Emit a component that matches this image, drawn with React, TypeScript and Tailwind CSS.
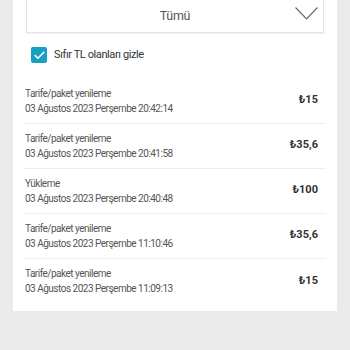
import { Check } from 'lucide-react';

const rows = [
  { title: 'Tarife/paket yenileme', date: '03 Ağustos 2023 Perşembe 20:42:14', amount: '₺15' },
  { title: 'Tarife/paket yenileme', date: '03 Ağustos 2023 Perşembe 20:41:58', amount: '₺35,6' },
  { title: 'Yükleme', date: '03 Ağustos 2023 Perşembe 20:40:48', amount: '₺100' },
  { title: 'Tarife/paket yenileme', date: '03 Ağustos 2023 Perşembe 11:10:46', amount: '₺35,6' },
  { title: 'Tarife/paket yenileme', date: '03 Ağustos 2023 Perşembe 11:09:13', amount: '₺15' },
];

export default function App() {
  return (
    <div className="h-[350px] w-[350px] overflow-hidden bg-[#ebebeb] font-['Roboto',sans-serif]">
      <div className="mx-[13px] bg-white px-[11px] pb-[7px]">
        <div className="relative mx-[2px] flex h-[33px] items-center justify-center border-x border-b border-[#e3e3e3] shadow-[0_1px_2px_rgba(0,0,0,0.06)]">
          <span className="text-[12.5px] tracking-[-0.3px] text-[#555]">Tümü</span>
          <svg className="absolute right-[5px] top-[7px]" width="23" height="13" viewBox="0 0 23 13" fill="none">
            <path d="M0.5 0.5 L11.5 12 L22.5 0.5" stroke="#666" strokeWidth="1.1" />
          </svg>
        </div>

        <label className="mt-[14px] flex items-center gap-[7px] pl-[7px]">
          <span className="flex h-[16px] w-[16px] items-center justify-center rounded-[2px] bg-[#1a9fc4]">
            <Check size={13} strokeWidth={3} className="text-white" />
          </span>
          <span className="text-[11px] tracking-[-0.4px] text-[#333]">Sıfır TL olanları gizle</span>
        </label>

        <div className="mt-[15px]">
          {rows.map((r, i) => (
            <div
              key={i}
              className={`flex h-[45px] items-center justify-between pl-[1px] pr-[8px] ${
                i < rows.length - 1 ? 'border-b border-[#eeeeee]' : ''
              }`}
            >
              <div className="flex flex-col text-[10px] leading-[15px] tracking-[-0.5px] text-[#555]">
                <span>{r.title}</span>
                <span>{r.date}</span>
              </div>
              <span className="text-[11px] font-bold text-[#333]">{r.amount}</span>
            </div>
          ))}
        </div>
      </div>
    </div>
  );
}
